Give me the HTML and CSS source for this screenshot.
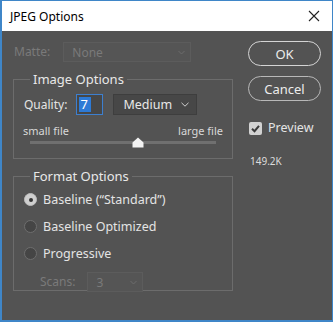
FILE: index.html
```html
<!DOCTYPE html>
<html>
<head>
<meta charset="utf-8">
<link rel="stylesheet" href="styles.css">
</head>
<body>
<div class="window">
  <div class="titlebar">
    <span class="title">JPEG Options</span>
    <svg class="close" width="12" height="12" viewBox="0 0 12 12"><path d="M1 1L11 11M11 1L1 11" stroke="#222" stroke-width="1.1" fill="none"/></svg>
  </div>
  <div class="content">
    <div class="left">
      <div class="matte-row">
        <span class="label disabled">Matte:</span>
        <div class="select matte-select disabled"><span>None</span><svg class="chev" width="7" height="5" viewBox="0 0 7 5"><path d="M0.5 1L3.5 4L6.5 1" stroke="#6c6c6c" fill="none"/></svg></div>
      </div>
      <fieldset class="group group-image">
        <legend>Image Options</legend>
        <div class="quality-row">
          <span class="label">Quality:</span>
          <div class="qinput"><span class="sel">7</span></div>
          <div class="select medium-select"><span>Medium</span><svg class="chev" width="8" height="5" viewBox="0 0 8 5"><path d="M0.5 0.8L4 4.2L7.5 0.8" stroke="#cfcfcf" fill="none"/></svg></div>
        </div>
        <div class="slider-labels"><span>small file</span><span>large file</span></div>
        <div class="slider">
          <div class="track"></div>
          <svg class="thumb" width="12" height="11" viewBox="0 0 12 11"><path d="M6 0.5L11.5 5.5V10.5H0.5V5.5Z" fill="#f2f2f2"/></svg>
        </div>
      </fieldset>
      <fieldset class="group group-format">
        <legend>Format Options</legend>
        <div class="radio-row"><span class="radio on"></span><span class="label">Baseline (“Standard”)</span></div>
        <div class="radio-row"><span class="radio"></span><span class="label">Baseline Optimized</span></div>
        <div class="radio-row"><span class="radio"></span><span class="label">Progressive</span></div>
        <div class="scans-row">
          <span class="label disabled">Scans:</span>
          <div class="select scans-select disabled"><span>3</span><svg class="chev" width="7" height="5" viewBox="0 0 7 5"><path d="M0.5 1L3.5 4L6.5 1" stroke="#6c6c6c" fill="none"/></svg></div>
        </div>
      </fieldset>
    </div>
    <div class="right">
      <div class="btn ok">OK</div>
      <div class="btn">Cancel</div>
      <div class="check-row">
        <span class="checkbox"><svg width="13" height="13" viewBox="0 0 13 13"><path d="M3 6.8L5.5 9.2L10 3.8" stroke="#3a3a3a" stroke-width="2" fill="none"/></svg></span>
        <span class="label">Preview</span>
      </div>
      <div class="size">149.2K</div>
    </div>
  </div>
</div>
</body>
</html>
```

FILE: styles.css
```css
* { box-sizing: border-box; }
html, body { margin: 0; padding: 0; }
body { width: 333px; height: 322px; overflow: hidden; background: #535353; }
.window {
  width: 333px; height: 322px;
  border: 1px solid #3f86c8;
  border-left-width: 2px;
  border-bottom-width: 2px;
  background: #535353;
  font-family: "Noto Sans", "Open Sans", sans-serif;
  color: #e4e4e4;
  display: flex; flex-direction: column;
}
.titlebar {
  height: 30px; background: #fff;
  display: flex; align-items: center; justify-content: space-between;
  padding: 0 12px 0 8px;
  flex: none;
}
.title { font-size: 12px; color: #000; }
.content { display: flex; flex: 1; }
.left { width: 232px; padding-left: 11px; }
.label { font-size: 12px; line-height: 16px; white-space: nowrap; }
.disabled { color: #7a7a7a; }
.matte-row { display: flex; align-items: center; margin-top: 11px; height: 20px; padding-left: 1px; }
.select {
  display: flex; align-items: center; justify-content: space-between;
  font-size: 12px; border: 1px solid #474747; background: #4e4e4e;
}
.matte-select { margin-left: 13px; width: 128px; height: 20px; padding: 0 5px 0 8px; border-color: #5c5c5c; background: #555; }
.group {
  margin: 0; padding: 0;
  border: 1px solid #6c6c6c;
  width: 220px;
  min-width: 0;
}
.group legend {
  margin-left: 16px; padding: 0 3px;
  font-size: 13px; line-height: 16px;
  color: #e8e8e8;
}
.group-image { margin-top: 9px; height: 88px; }
.quality-row { display: flex; align-items: center; margin-top: 7px; height: 21px; padding-left: 10px; }
.qinput {
  margin-left: 9px; width: 27px; height: 21px;
  border: 1px solid #3d7fcf; background: #474747;
  display: flex; align-items: center; padding-left: 2px;
}
.qinput .sel { background: #2d7ad6; color: #fff; font-size: 13px; line-height: 15px; padding: 0 3px 0 1px; }
.medium-select { margin-left: 10px; width: 84px; height: 21px; padding: 0 7px 0 9px; font-size: 12.5px; color: #e8e8e8; background: #474747; border-color: #3e3e3e; }
.slider-labels { display: flex; justify-content: space-between; font-size: 11px; line-height: 13px; margin-top: 9px; padding: 0 9px 0 9px; color: #d8d8d8; }
.slider { position: relative; height: 13px; margin: 0 16px 0 16px; }
.track { position: absolute; left: 0; right: 0; top: 4px; height: 3px; background: #707070; }
.thumb { position: absolute; left: 102px; top: 0; }
.group-format { margin-top: 9px; height: 123px; }
.radio-row { display: flex; align-items: center; height: 27px; padding-left: 10px; }
.radio-row:first-of-type { margin-top: 2px; }
.radio-row .label { margin-left: 6px; font-size: 12.5px; }
.radio { width: 13px; height: 13px; border-radius: 50%; border: 1px solid #6e6e6e; background: #454545; flex: none; position: relative; }
.radio.on { background: #cfcfcf; border-color: #bdbdbd; }
.radio.on::after { content: ""; position: absolute; left: 3.5px; top: 3.5px; width: 4px; height: 4px; border-radius: 50%; background: #333; }
.scans-row { display: flex; align-items: center; height: 20px; margin-top: 5px; padding-left: 26px; }
.scans-select { margin-left: 12px; width: 56px; height: 20px; padding: 0 5px 0 8px; border-color: #5c5c5c; background: #555; }
.right { padding-left: 14px; padding-top: 10px; display: flex; flex-direction: column; }
.btn {
  width: 73px; height: 25px; border-radius: 13px;
  border: 1px solid #b8b8b8; display: flex; align-items: center; justify-content: center;
  font-size: 13px; color: #ececec; margin-bottom: 10px;
}
.btn.ok { border-color: #d4d4d4; }
.check-row { display: flex; align-items: center; margin-top: 9px; padding-left: 1px; }
.checkbox { width: 13px; height: 13px; border-radius: 2px; background: #d2d2d2; display: block; }
.checkbox svg { display: block; }
.check-row .label { margin-left: 6px; font-size: 12.5px; }
.size { font-size: 10px; margin-top: 18px; padding-left: 2px; color: #dcdcdc; }
```
